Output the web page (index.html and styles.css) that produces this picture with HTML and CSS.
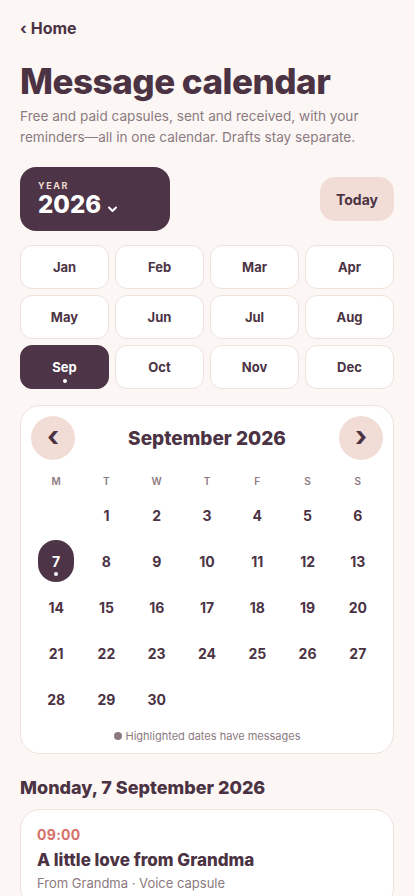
FILE: index.html
```html
<!DOCTYPE html>
<html lang="en">
<head>
    <meta charset="UTF-8" />
    <meta name="viewport" content="width=device-width, initial-scale=1" />
    <title>Message calendar</title>
    <link rel="stylesheet" href="styles.css">
</head>
<body>
    <main class="page">
        <a href="#" class="back">&lsaquo; Home</a>
        <h1 class="title">Message calendar</h1>
        <p class="intro">Free and paid capsules, sent and received, with your reminders—all in one calendar. Drafts stay separate.</p>

        <div class="toolbar">
            <button class="year-btn">
                <span class="year-label">YEAR</span>
                <span class="year-value">2026 <svg class="chev" width="11" height="7" viewBox="0 0 11 7"><path d="M2 1.5l3.5 3.5 3.5-3.5" fill="none" stroke="#fff" stroke-width="2" stroke-linecap="round" stroke-linejoin="round"/></svg></span>
            </button>
            <button class="today-btn">Today</button>
        </div>

        <div class="months">
            <button class="month">Jan</button>
            <button class="month">Feb</button>
            <button class="month">Mar</button>
            <button class="month">Apr</button>
            <button class="month">May</button>
            <button class="month">Jun</button>
            <button class="month">Jul</button>
            <button class="month">Aug</button>
            <button class="month active">Sep<span class="dot"></span></button>
            <button class="month">Oct</button>
            <button class="month">Nov</button>
            <button class="month">Dec</button>
        </div>

        <section class="calendar">
            <div class="cal-head">
                <button class="nav">&lsaquo;</button>
                <h2>September 2026</h2>
                <button class="nav">&rsaquo;</button>
            </div>
            <div class="grid weekdays">
                <span>M</span><span>T</span><span>W</span><span>T</span><span>F</span><span>S</span><span>S</span>
            </div>
            <div class="grid days">
                <span></span>
                <span class="day">1</span><span class="day">2</span><span class="day">3</span><span class="day">4</span><span class="day">5</span><span class="day">6</span>
                <span class="day selected">7<span class="dot"></span></span>
                <span class="day">8</span><span class="day">9</span><span class="day">10</span><span class="day">11</span><span class="day">12</span><span class="day">13</span>
                <span class="day">14</span><span class="day">15</span><span class="day">16</span><span class="day">17</span><span class="day">18</span><span class="day">19</span><span class="day">20</span>
                <span class="day">21</span><span class="day">22</span><span class="day">23</span><span class="day">24</span><span class="day">25</span><span class="day">26</span><span class="day">27</span>
                <span class="day">28</span><span class="day">29</span><span class="day">30</span>
            </div>
            <p class="legend"><span class="legend-dot"></span>Highlighted dates have messages</p>
        </section>

        <h3 class="day-title">Monday, 7 September 2026</h3>
        <article class="event">
            <div class="time">09:00</div>
            <div class="event-title">A little love from Grandma</div>
            <div class="meta">From Grandma · Voice capsule</div>
        </article>
    </main>
</body>
</html>
```

FILE: styles.css
```css
* {
    margin: 0;
    padding: 0;
    box-sizing: border-box;
    font-family: Inter, 'Noto Sans', sans-serif;
}
body {
    background: #fcf7f4;
    color: #4b3344;
}
button {
    font-family: inherit;
    border: none;
    cursor: pointer;
    color: inherit;
}
.page {
    padding: 17px 20px 0;
}
.back {
    display: inline-block;
    font-size: 16px;
    font-weight: 700;
    color: #4b3344;
    text-decoration: none;
    line-height: 22px;
}
.title {
    margin-top: 21px;
    font-size: 35px;
    font-weight: 800;
    letter-spacing: -0.5px;
    line-height: 42px;
}
.intro {
    margin-top: 4px;
    font-size: 13.6px;
    line-height: 21px;
    color: #8b7a81;
}
.toolbar {
    margin-top: 19px;
    display: flex;
    justify-content: space-between;
    align-items: center;
}
.year-btn {
    width: 150px;
    height: 64px;
    background: #4d3446;
    border-radius: 16px;
    display: flex;
    flex-direction: column;
    align-items: flex-start;
    justify-content: center;
    padding: 0 18px;
    color: #fff;
}
.year-label {
    font-size: 9px;
    font-weight: 700;
    letter-spacing: 1.6px;
    color: #f0dcd4;
    line-height: 11px;
}
.year-value {
    font-size: 24px;
    font-weight: 800;
    line-height: 28px;
    display: flex;
    align-items: center;
    gap: 6px;
}
.chev {
    margin-top: 10px;
}
.today-btn {
    width: 74px;
    height: 44px;
    background: #f2ddd6;
    border-radius: 15px;
    font-size: 14px;
    font-weight: 700;
}
.months {
    margin-top: 14px;
    display: grid;
    grid-template-columns: repeat(4, 1fr);
    gap: 6px 6px;
}
.month {
    position: relative;
    height: 44px;
    background: #fff;
    border: 1px solid #efe2db;
    border-radius: 12px;
    font-size: 13px;
    font-weight: 700;
}
.month.active {
    background: #4d3446;
    border-color: #4d3446;
    color: #fff;
}
.month .dot {
    position: absolute;
    left: 50%;
    bottom: 5px;
    width: 4px;
    height: 4px;
    margin-left: -2px;
    border-radius: 50%;
    background: #fff;
}
.calendar {
    margin-top: 16px;
    background: #fff;
    border: 1px solid #efe2db;
    border-radius: 20px;
    padding: 10px 10px 10px;
}
.cal-head {
    display: flex;
    align-items: center;
    justify-content: space-between;
}
.cal-head h2 {
    font-size: 19px;
    font-weight: 800;
}
.nav {
    width: 44px;
    height: 44px;
    border-radius: 50%;
    background: #f2ddd6;
    font-size: 28px;
    font-weight: 700;
    line-height: 40px;
    padding-bottom: 4px;
}
.grid {
    display: grid;
    grid-template-columns: repeat(7, 1fr);
    justify-items: center;
}
.weekdays {
    margin-top: 12px;
    font-size: 10px;
    font-weight: 600;
    color: #8b7a81;
    line-height: 18px;
}
.days {
    margin-top: 4px;
    row-gap: 4px;
}
.day {
    position: relative;
    width: 36px;
    height: 42px;
    display: flex;
    align-items: center;
    justify-content: center;
    font-size: 14px;
    font-weight: 700;
    border-radius: 18px;
}
.day.selected {
    background: #4d3446;
    color: #fff;
}
.day .dot {
    position: absolute;
    left: 50%;
    bottom: 6px;
    width: 4px;
    height: 4px;
    margin-left: -2px;
    border-radius: 50%;
    background: #fff;
}
.legend {
    margin-top: 9px;
    text-align: center;
    font-size: 11px;
    color: #8b7a81;
    display: flex;
    align-items: center;
    justify-content: center;
    gap: 4px;
}
.legend-dot {
    width: 8px;
    height: 8px;
    border-radius: 50%;
    background: #8b7a81;
}
.day-title {
    margin-top: 23px;
    font-size: 18px;
    font-weight: 800;
    line-height: 22px;
}
.event {
    margin-top: 10px;
    background: #fff;
    border: 1px solid #efe2db;
    border-radius: 20px;
    padding: 16px 16px 16px;
}
.time {
    font-size: 14px;
    font-weight: 700;
    color: #d8706a;
    letter-spacing: 0.3px;
}
.event-title {
    margin-top: 7px;
    font-size: 17px;
    font-weight: 800;
}
.meta {
    margin-top: 5px;
    font-size: 13px;
    color: #8b7a81;
}
```
